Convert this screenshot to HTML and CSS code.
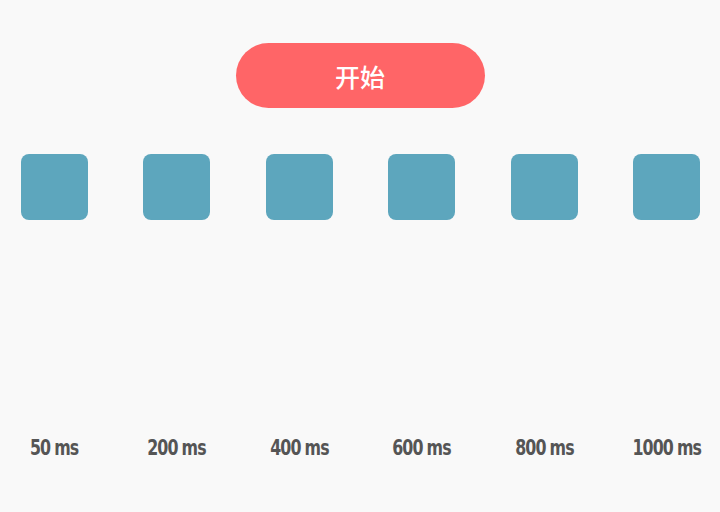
FILE: index.html
```html
<!DOCTYPE html>
<html lang="zh-CN">
<head>
  <meta charset="UTF-8">
  <meta name="viewport" content="width=device-width, initial-scale=1.0">
  <title>Transition Speed</title>
  <link rel="stylesheet" href="styles.css">
</head>
<body>

  <div class="toolbar">
    <button class="start-btn" onclick="toggleRun()">开始</button>
  </div>

  <div class="lanes">
    <div class="lane">
      <div class="box" style="transition-duration: 50ms"></div>
      <span class="label">50 ms</span>
    </div>
    <div class="lane">
      <div class="box" style="transition-duration: 200ms"></div>
      <span class="label">200 ms</span>
    </div>
    <div class="lane">
      <div class="box" style="transition-duration: 400ms"></div>
      <span class="label">400 ms</span>
    </div>
    <div class="lane">
      <div class="box" style="transition-duration: 600ms"></div>
      <span class="label">600 ms</span>
    </div>
    <div class="lane">
      <div class="box" style="transition-duration: 800ms"></div>
      <span class="label">800 ms</span>
    </div>
    <div class="lane">
      <div class="box" style="transition-duration: 1000ms"></div>
      <span class="label">1000 ms</span>
    </div>
  </div>

  <script>
    // drop every box down its lane; each one takes its own duration
    function toggleRun() {
      document.querySelector('.lanes').classList.toggle('running');
    }
  </script>
</body>
</html>
```

FILE: styles.css
```css
body {
  margin: 0;
  background: #f9f9f9;
  font-family: "Noto Sans CJK SC", "Noto Sans", sans-serif;
}
.toolbar {
  display: flex;
  justify-content: center;
  padding-top: 43px;
}
.start-btn {
  width: 249px;
  height: 65px;
  border: none;
  border-radius: 33px;
  background: #ff6567;
  color: #fff;
  font-family: "Noto Sans CJK SC", sans-serif;
  font-size: 25px;
  font-weight: 500;
  cursor: pointer;
}
.lanes {
  display: flex;
  justify-content: space-between;
  margin-top: 46px;
  padding: 0 20px 0 21px;
}
.lane {
  display: flex;
  flex-direction: column;
  align-items: center;
  width: 67px;
  height: 306px;
}
.box {
  width: 67px;
  height: 66px;
  border-radius: 8px;
  background: #5da6bd;
  transition-property: transform;
  transition-timing-function: ease-in-out;
}
.lanes.running .box {
  transform: translateY(200px);
}
.label {
  display: inline-block;
  margin-top: auto;
  line-height: 24px;
  white-space: nowrap;
  color: #555;
  font-family: "DejaVu Sans Condensed", "DejaVu Sans", sans-serif;
  font-stretch: condensed;
  font-weight: bold;
  font-size: 22px;
  letter-spacing: -1.2px;
  word-spacing: -0.5px;
  transform: scaleX(0.8);
}
```
